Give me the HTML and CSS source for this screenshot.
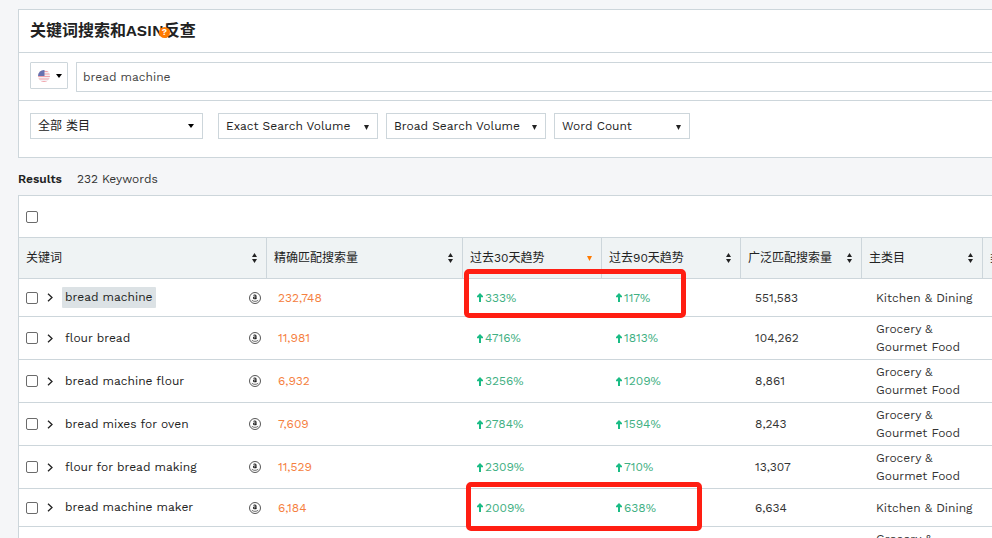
FILE: index.html
```html
<!DOCTYPE html>
<html lang="zh-CN">
<head>
<meta charset="UTF-8">
<meta name="viewport" content="width=device-width, initial-scale=1">
<title>关键词搜索和ASIN反查</title>
<link rel="stylesheet" href="styles.css">
</head>

<body>

<!-- shared icons -->
<svg class="sprite" aria-hidden="true">
    <symbol id="caret" viewBox="0 0 6 4"><path d="M0 0h6L3 4z"/></symbol>
    <symbol id="caret-small" viewBox="0 0 5 5"><path d="M0 0h5L2.5 5z"/></symbol>
    <symbol id="sort" viewBox="0 0 5 12"><path d="M2.5 1 5 5H0zM0 7h5L2.500 11z"/></symbol>
    <symbol id="chevron" viewBox="0 0 6 9"><path d="M1 .7 5 4.500 1 8.300" fill="none" stroke="#222" stroke-width="1.300"/></symbol>
    <symbol id="up" viewBox="0 0 6 9"><path d="M3 0 6 3v1.200H4V9H2V4.200H0V3z"/></symbol>
    <symbol id="amazon" viewBox="0 0 12 12">
        <circle cx="6" cy="6" r="5.500" fill="none" stroke="#444" stroke-width=".9"/>
        <path d="M4.600 3.600C5 2.700 7 2.700 7 4.100V6.400l.5.500M7 4.800C5.300 4.700 4.500 5.200 4.500 6 4.600 7.200 6.600 6.900 7 5.800" fill="none" stroke="#222" stroke-width="1.100"/>
        <path d="M2.800 8.300C4.600 9.700 7.300 9.700 9.200 8.300" fill="none" stroke="#444" stroke-width=".8"/>
    </symbol>
</svg>

<main class="page">

<section class="panel">
    <div class="panel-head">
        <h1 class="title">关键词搜索和ASIN<button class="help" aria-label="帮助">?</button>反查</h1>
    </div>

    <form class="search-row">
        <button type="button" class="country" aria-label="美国" aria-haspopup="listbox">
            <svg class="flag" viewBox="0 0 12 12">
                <clipPath id="round"><circle cx="6" cy="6" r="6"/></clipPath>
                <g clip-path="url(#round)">
                    <path fill="#f4eff3" d="M0 0h12v12H0z"/>
                    <path stroke="#f2a3aa" stroke-width="1.200" d="M0 1.500h12M0 4h12M0 6.500h12M0 9h12M0 11.500h12"/>
                    <path fill="#6672b0" d="M0 0h6.500v6H0z"/>
                </g>
            </svg>
            <svg class="caret"><use href="#caret"/></svg>
        </button>
        <input class="search" type="text" value="bread machine" aria-label="关键词">
    </form>

    <form class="filters">
        <div class="drop category">
            <select aria-label="类目"><option>全部 类目</option></select>
            <svg class="caret"><use href="#caret"/></svg>
        </div>
        <div class="drop volume">
            <select aria-label="Exact Search Volume"><option>Exact Search Volume</option></select>
            <svg class="caret-small"><use href="#caret-small"/></svg>
        </div>
        <div class="drop volume">
            <select aria-label="Broad Search Volume"><option>Broad Search Volume</option></select>
            <svg class="caret-small"><use href="#caret-small"/></svg>
        </div>
        <div class="drop words">
            <select aria-label="Word Count"><option>Word Count</option></select>
            <svg class="caret-small"><use href="#caret-small"/></svg>
        </div>
    </form>
</section>

<div class="summary"><b>Results</b><span>232 Keywords</span></div>

<section class="results">
    <div class="select-all"><input type="checkbox" id="all" aria-label="全选"></div>

    <table class="keywords">
        <colgroup>
            <col class="col-keyword"><col class="col-exact"><col class="col-trend"><col class="col-trend">
            <col class="col-broad"><col class="col-category"><col class="col-last">
        </colgroup>
        <thead>
            <tr>
                <th><div class="th"><span>关键词</span><svg class="sort"><use href="#sort"/></svg></div></th>
                <th><div class="th"><span>精确匹配搜索量</span><svg class="sort"><use href="#sort"/></svg></div></th>
                <th><div class="th"><span>过去30天趋势</span><svg class="caret-small active"><use href="#caret-small"/></svg></div></th>
                <th><div class="th"><span>过去90天趋势</span><svg class="sort"><use href="#sort"/></svg></div></th>
                <th><div class="th"><span>广泛匹配搜索量</span><svg class="sort"><use href="#sort"/></svg></div></th>
                <th><div class="th"><span>主类目</span><svg class="sort"><use href="#sort"/></svg></div></th>
                <th><div class="th"><span>类别</span></div></th>
            </tr>
        </thead>
        <tbody id="rows"></tbody>
    </table>

    <div class="mark mark-first"></div>
    <div class="mark mark-last"></div>
</section>

</main>

<script>
const keywords = [
    ["bread machine", "232,748", "333%", "117%", "551,583", "Kitchen & Dining"],
    ["flour bread", "11,981", "4716%", "1813%", "104,262", "Grocery & Gourmet Food"],
    ["bread machine flour", "6,932", "3256%", "1209%", "8,861", "Grocery & Gourmet Food"],
    ["bread mixes for oven", "7,609", "2784%", "1594%", "8,243", "Grocery & Gourmet Food"],
    ["flour for bread making", "11,529", "2309%", "710%", "13,307", "Grocery & Gourmet Food"],
    ["bread machine maker", "6,184", "2009%", "638%", "6,634", "Kitchen & Dining"],
    ["", "", "", "", "", "Grocery & Gourmet Food"]
];

function trend(value) {
    return value ? `<span class="trend"><svg class="up"><use href="#up"/></svg>${value}</span>` : "";
}

document.getElementById("rows").innerHTML = keywords.map(([name, exact, t30, t90, broad, category], i) => `
    <tr>
        <td class="keyword">${name ? `<div class="keyword-cell">
            <input type="checkbox" id="k${i}">
            <button class="expand" aria-label="展开"><svg><use href="#chevron"/></svg></button>
            <label class="name${i === 0 ? " selected" : ""}" for="k${i}">${name}</label>
            <a class="amazon" href="#" aria-label="Amazon"><svg><use href="#amazon"/></svg></a>
        </div>` : ""}</td>
        <td class="exact">${exact}</td>
        <td>${trend(t30)}</td>
        <td>${trend(t90)}</td>
        <td>${broad}</td>
        <td>${category.replace("&", "&amp;")}</td>
        <td></td>
    </tr>
`).join("");
</script>

</body>
</html>
```
FILE: styles.css
```css
* {
    box-sizing: border-box;
}

body {
    margin: 0;
    background: #f5f6f8;
    color: #333;
    font-family: "Work Sans", Inter, "Noto Sans CJK SC", sans-serif;
    font-size: 12px;
    line-height: 18px;
    overflow: hidden;
}

button, input, select {
    font: inherit;
    color: inherit;
}

svg {
    display: block;
    flex: none;
}

.sprite {
    position: absolute;
    width: 0;
    height: 0;
}

.page {
    padding: 9px 0 0 18px;
}

.panel {
    background: white;
    border: 1px solid #cdd6db;
    border-right: none;
}

.panel-head {
    padding: 9px 11px;
    border-bottom: 1px solid #cdd6db;
}

.title {
    margin: 0;
    font-size: 16px;
    line-height: 24px;
    font-weight: 600;
    color: #222;
}

.help {
    position: absolute;
    width: 11px;
    height: 11px;
    margin: 8px 0 0 -5px;
    padding: 0;
    border: none;
    border-radius: 50%;
    background: #ff7a00;
    color: white;
    font-size: 9px;
    line-height: 11px;
    font-weight: 600;
}

.search-row {
    display: flex;
    align-items: flex-start;
    gap: 8px;
    padding: 9px 0 8px 11px;
    border-bottom: 1px solid #cdd6db;
}

.country {
    display: flex;
    align-items: center;
    justify-content: space-between;
    width: 38px;
    height: 27px;
    padding: 0 5px 0 7px;
    background: white;
    border: 1px solid #cdd6db;
    border-radius: 1px;
}

.flag {
    width: 12px;
    height: 12px;
}

.caret {
    width: 6px;
    height: 4px;
    fill: #000;
}

.caret-small {
    width: 5px;
    height: 5px;
    fill: #222;
}

.caret-small.active {
    fill: #ff7a00;
}

.search {
    flex: 1;
    min-width: 0;
    height: 30px;
    padding: 0 6px;
    background: white;
    border: 1px solid #cdd6db;
    border-right: none;
    border-radius: 1px;
    color: #444;
}

.filters {
    display: flex;
    gap: 8px;
    padding: 12px 11px 18px;
}

.drop {
    display: grid;
    align-items: center;
    height: 26px;
    border: 1px solid #cdd6db;
    color: #222;
}

.drop select {
    grid-area: 1 / 1;
    width: 100%;
    height: 24px;
    padding: 0 7px;
    background: none;
    border: none;
    appearance: none;
}

.drop svg {
    grid-area: 1 / 1;
    justify-self: end;
    margin-right: 8px;
    pointer-events: none;
}

.drop .caret-small {
    margin-top: 3px;
}

.category {
    width: 173px;
    margin-right: 7px;
}

.volume {
    width: 160px;
}

.words {
    width: 136px;
}

.summary {
    display: flex;
    gap: 15px;
    padding: 12px 0 7px;
}

.summary b {
    font-weight: 600;
    color: #222;
}

.results {
    position: relative;
    overflow: hidden;
    background: white;
    border: 1px solid #cdd6db;
    border-right: none;
}

.select-all {
    display: flex;
    align-items: center;
    height: 41px;
    padding-left: 7px;
}

input[type="checkbox"] {
    flex: none;
    appearance: none;
    width: 12px;
    height: 12px;
    margin: 0;
    background: white;
    border: 1px solid #6b6b6b;
    border-radius: 2px;
}

input[type="checkbox"]:checked {
    background: #6b6b6b;
}

.keywords {
    width: 100%;
    min-width: 1040px;
    table-layout: fixed;
    border-collapse: separate;
    border-spacing: 0;
}

.col-keyword {
    width: 248px;
}

.col-exact {
    width: 196px;
}

.col-trend {
    width: 139px;
}

.col-broad,
.col-category {
    width: 121px;
}

th {
    height: 42px;
    padding: 0 9px 0 7px;
    background: #eff3f4;
    border: solid #cdd6db;
    border-width: 1px 1px 1px 0;
    font-weight: 400;
    color: #222;
    text-align: left;
}

.th {
    display: flex;
    align-items: center;
    justify-content: space-between;
    white-space: nowrap;
}

.sort {
    width: 5px;
    height: 12px;
    fill: #222;
}

td {
    height: 38px;
    padding: 3px 8px 3px 14px;
    border-bottom: 1px solid #cdd6db;
}

.keyword {
    padding: 0 6px 0 7px;
}

.keyword-cell {
    display: flex;
    align-items: center;
}

.expand {
    width: 14px;
    margin: 0 4px 0 6px;
    padding: 0 3px;
    background: none;
    border: none;
}

.expand svg {
    width: 6px;
    height: 9px;
}

.name {
    padding: 1px 4px 2px 3px;
    border-radius: 1px;
    color: #222;
}

.name.selected {
    background: #dce2e5;
}

.amazon {
    margin-left: auto;
}

.amazon svg {
    width: 12px;
    height: 12px;
}

.exact {
    padding-left: 11px;
    color: #f5803e;
}

.trend {
    display: flex;
    align-items: center;
    gap: 2px;
    color: #3fb083;
}

.up {
    width: 6px;
    height: 9px;
    fill: #1abc85;
}

/* highlighted results */
.mark {
    position: absolute;
    height: 49px;
    border: 5px solid #ff1e12;
    border-radius: 5px;
    pointer-events: none;
}

.mark-first {
    top: 73px;
    left: 445px;
    width: 222px;
}

.mark-last {
    top: 286px;
    left: 447px;
    width: 236px;
}
```
